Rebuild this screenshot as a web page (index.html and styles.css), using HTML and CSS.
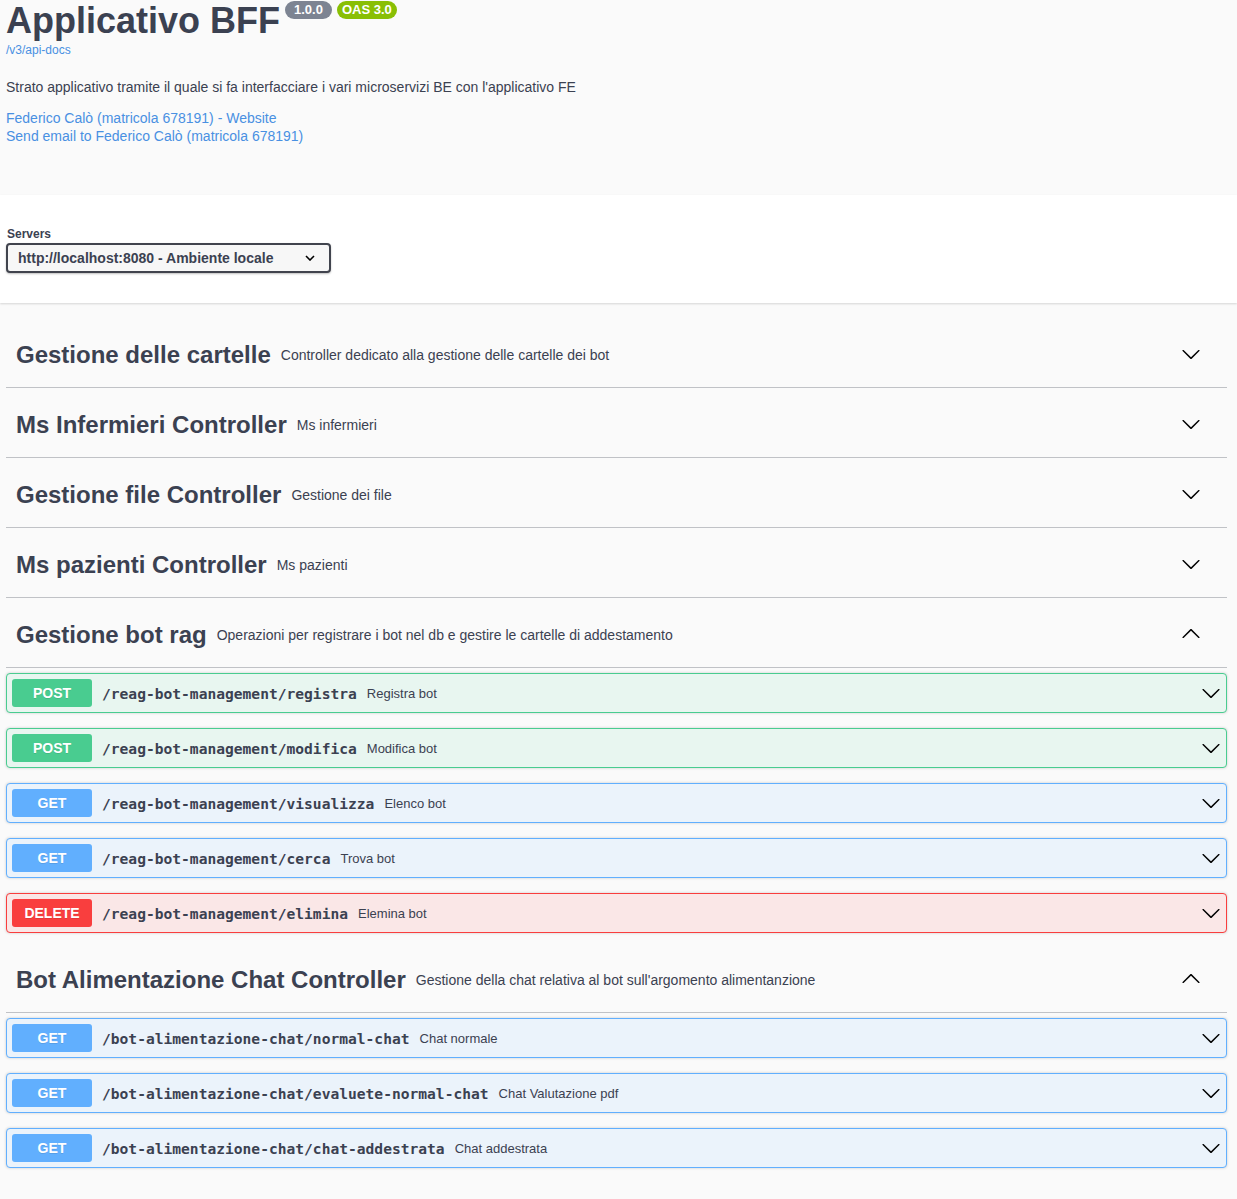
FILE: index.html
```html
<!DOCTYPE html>
<html lang="it">
<head>
<meta charset="utf-8">
<title>Applicativo BFF</title>
<link rel="stylesheet" href="styles.css">
</head>
<body>
<div class="info">
  <div class="title-row">
    <h2 class="title">Applicativo BFF</h2>
    <span class="badge badge-version">1.0.0</span>
    <span class="badge badge-oas">OAS 3.0</span>
  </div>
  <a class="url" href="#">/v3/api-docs</a>
  <p class="desc">Strato applicativo tramite il quale si fa interfacciare i vari microservizi BE con l'applicativo FE</p>
  <div class="contacts">
    <a href="#">Federico Calò (matricola 678191) - Website</a>
    <a href="#">Send email to Federico Calò (matricola 678191)</a>
  </div>
</div>

<div class="scheme-container">
  <div class="servers">
    <span class="servers-label">Servers</span>
    <div class="select">
      <span>http://localhost:8080 - Ambiente locale</span>
      <svg class="select-arrow" width="10" height="6" viewBox="0 0 10 6"><path d="M1 1l4 4 4-4" fill="none" stroke="#000" stroke-width="1.6"/></svg>
    </div>
  </div>
</div>

<div class="wrapper">
  <section class="tag-section">
    <div class="tag-header">
      <h3 class="tag-title">Gestione delle cartelle</h3>
      <span class="tag-desc">Controller dedicato alla gestione delle cartelle dei bot</span>
      <svg class="arrow" width="20" height="20" viewBox="0 0 20 20"><path d="M17.418 6.109c.272-.268.709-.268.979 0s.271.701 0 .969l-7.908 7.83c-.27.268-.707.268-.979 0l-7.908-7.83c-.27-.268-.27-.701 0-.969.271-.268.709-.268.979 0L10 13.25l7.418-7.141z"/></svg>
    </div>
  </section>

  <section class="tag-section">
    <div class="tag-header">
      <h3 class="tag-title">Ms Infermieri Controller</h3>
      <span class="tag-desc">Ms infermieri</span>
      <svg class="arrow" width="20" height="20" viewBox="0 0 20 20"><path d="M17.418 6.109c.272-.268.709-.268.979 0s.271.701 0 .969l-7.908 7.83c-.27.268-.707.268-.979 0l-7.908-7.83c-.27-.268-.27-.701 0-.969.271-.268.709-.268.979 0L10 13.25l7.418-7.141z"/></svg>
    </div>
  </section>

  <section class="tag-section">
    <div class="tag-header">
      <h3 class="tag-title">Gestione file Controller</h3>
      <span class="tag-desc">Gestione dei file</span>
      <svg class="arrow" width="20" height="20" viewBox="0 0 20 20"><path d="M17.418 6.109c.272-.268.709-.268.979 0s.271.701 0 .969l-7.908 7.83c-.27.268-.707.268-.979 0l-7.908-7.83c-.27-.268-.27-.701 0-.969.271-.268.709-.268.979 0L10 13.25l7.418-7.141z"/></svg>
    </div>
  </section>

  <section class="tag-section">
    <div class="tag-header">
      <h3 class="tag-title">Ms pazienti Controller</h3>
      <span class="tag-desc">Ms pazienti</span>
      <svg class="arrow" width="20" height="20" viewBox="0 0 20 20"><path d="M17.418 6.109c.272-.268.709-.268.979 0s.271.701 0 .969l-7.908 7.83c-.27.268-.707.268-.979 0l-7.908-7.83c-.27-.268-.27-.701 0-.969.271-.268.709-.268.979 0L10 13.25l7.418-7.141z"/></svg>
    </div>
  </section>

  <section class="tag-section">
    <div class="tag-header">
      <h3 class="tag-title">Gestione bot rag</h3>
      <span class="tag-desc">Operazioni per registrare i bot nel db e gestire le cartelle di addestamento</span>
      <svg class="arrow up" width="20" height="20" viewBox="0 0 20 20"><path d="M17.418 6.109c.272-.268.709-.268.979 0s.271.701 0 .969l-7.908 7.83c-.27.268-.707.268-.979 0l-7.908-7.83c-.27-.268-.27-.701 0-.969.271-.268.709-.268.979 0L10 13.25l7.418-7.141z"/></svg>
    </div>
    <div class="ops">
      <div class="op op-post">
        <span class="method">POST</span>
        <span class="path">/reag-bot-management/registra</span>
        <span class="op-desc">Registra bot</span>
        <svg class="op-arrow" width="20" height="20" viewBox="0 0 20 20"><path d="M17.418 6.109c.272-.268.709-.268.979 0s.271.701 0 .969l-7.908 7.83c-.27.268-.707.268-.979 0l-7.908-7.83c-.27-.268-.27-.701 0-.969.271-.268.709-.268.979 0L10 13.25l7.418-7.141z"/></svg>
      </div>
      <div class="op op-post">
        <span class="method">POST</span>
        <span class="path">/reag-bot-management/modifica</span>
        <span class="op-desc">Modifica bot</span>
        <svg class="op-arrow" width="20" height="20" viewBox="0 0 20 20"><path d="M17.418 6.109c.272-.268.709-.268.979 0s.271.701 0 .969l-7.908 7.83c-.27.268-.707.268-.979 0l-7.908-7.83c-.27-.268-.27-.701 0-.969.271-.268.709-.268.979 0L10 13.25l7.418-7.141z"/></svg>
      </div>
      <div class="op op-get">
        <span class="method">GET</span>
        <span class="path">/reag-bot-management/visualizza</span>
        <span class="op-desc">Elenco bot</span>
        <svg class="op-arrow" width="20" height="20" viewBox="0 0 20 20"><path d="M17.418 6.109c.272-.268.709-.268.979 0s.271.701 0 .969l-7.908 7.83c-.27.268-.707.268-.979 0l-7.908-7.83c-.27-.268-.27-.701 0-.969.271-.268.709-.268.979 0L10 13.25l7.418-7.141z"/></svg>
      </div>
      <div class="op op-get">
        <span class="method">GET</span>
        <span class="path">/reag-bot-management/cerca</span>
        <span class="op-desc">Trova bot</span>
        <svg class="op-arrow" width="20" height="20" viewBox="0 0 20 20"><path d="M17.418 6.109c.272-.268.709-.268.979 0s.271.701 0 .969l-7.908 7.83c-.27.268-.707.268-.979 0l-7.908-7.83c-.27-.268-.27-.701 0-.969.271-.268.709-.268.979 0L10 13.25l7.418-7.141z"/></svg>
      </div>
      <div class="op op-delete">
        <span class="method">DELETE</span>
        <span class="path">/reag-bot-management/elimina</span>
        <span class="op-desc">Elemina bot</span>
        <svg class="op-arrow" width="20" height="20" viewBox="0 0 20 20"><path d="M17.418 6.109c.272-.268.709-.268.979 0s.271.701 0 .969l-7.908 7.83c-.27.268-.707.268-.979 0l-7.908-7.83c-.27-.268-.27-.701 0-.969.271-.268.709-.268.979 0L10 13.25l7.418-7.141z"/></svg>
      </div>
    </div>
  </section>

  <section class="tag-section">
    <div class="tag-header">
      <h3 class="tag-title">Bot Alimentazione Chat Controller</h3>
      <span class="tag-desc">Gestione della chat relativa al bot sull'argomento alimentanzione</span>
      <svg class="arrow up" width="20" height="20" viewBox="0 0 20 20"><path d="M17.418 6.109c.272-.268.709-.268.979 0s.271.701 0 .969l-7.908 7.83c-.27.268-.707.268-.979 0l-7.908-7.83c-.27-.268-.27-.701 0-.969.271-.268.709-.268.979 0L10 13.25l7.418-7.141z"/></svg>
    </div>
    <div class="ops">
      <div class="op op-get">
        <span class="method">GET</span>
        <span class="path">/bot-alimentazione-chat/normal-chat</span>
        <span class="op-desc">Chat normale</span>
        <svg class="op-arrow" width="20" height="20" viewBox="0 0 20 20"><path d="M17.418 6.109c.272-.268.709-.268.979 0s.271.701 0 .969l-7.908 7.83c-.27.268-.707.268-.979 0l-7.908-7.83c-.27-.268-.27-.701 0-.969.271-.268.709-.268.979 0L10 13.25l7.418-7.141z"/></svg>
      </div>
      <div class="op op-get">
        <span class="method">GET</span>
        <span class="path">/bot-alimentazione-chat/evaluete-normal-chat</span>
        <span class="op-desc">Chat Valutazione pdf</span>
        <svg class="op-arrow" width="20" height="20" viewBox="0 0 20 20"><path d="M17.418 6.109c.272-.268.709-.268.979 0s.271.701 0 .969l-7.908 7.83c-.27.268-.707.268-.979 0l-7.908-7.83c-.27-.268-.27-.701 0-.969.271-.268.709-.268.979 0L10 13.25l7.418-7.141z"/></svg>
      </div>
      <div class="op op-get">
        <span class="method">GET</span>
        <span class="path">/bot-alimentazione-chat/chat-addestrata</span>
        <span class="op-desc">Chat addestrata</span>
        <svg class="op-arrow" width="20" height="20" viewBox="0 0 20 20"><path d="M17.418 6.109c.272-.268.709-.268.979 0s.271.701 0 .969l-7.908 7.83c-.27.268-.707.268-.979 0l-7.908-7.83c-.27-.268-.27-.701 0-.969.271-.268.709-.268.979 0L10 13.25l7.418-7.141z"/></svg>
      </div>
    </div>
  </section>
</div>
</body>
</html>
```
FILE: styles.css
```css
html, body {
  margin: 0;
  padding: 0;
  background: #fafafa;
  font-family: "Liberation Sans", Arial, sans-serif;
  color: #3b4151;
}

.info {
  height: 195px;
  box-sizing: border-box;
  padding: 0 6px;
}

.title-row {
  display: flex;
  align-items: flex-start;
}

.title {
  margin: 0;
  font-size: 36px;
  line-height: 41px;
  font-weight: bold;
  color: #3b4151;
}

.badge {
  display: inline-block;
  margin-top: 1px;
  height: 18px;
  line-height: 18px;
  border-radius: 57px;
  color: #fff;
  font-size: 13px;
  font-weight: bold;
  text-align: center;
}

.badge-version {
  background: #7d8492;
  margin-left: 5px;
  padding: 0 9px;
}

.badge-oas {
  background: #89bf04;
  margin-left: 5px;
  padding: 0 5px;
}

.url {
  display: block;
  margin-top: 2px;
  font-size: 12px;
  line-height: 14px;
  color: #4990e2;
  text-decoration: none;
}

.desc {
  margin: 22px 0 0;
  font-size: 14px;
  line-height: 17px;
}

.contacts {
  margin-top: 13px;
  display: flex;
  flex-direction: column;
  align-items: flex-start;
}

.contacts a {
  font-size: 14px;
  line-height: 18px;
  color: #4990e2;
  text-decoration: none;
}

.scheme-container {
  background: #fff;
  box-shadow: 0 1px 2px 0 rgba(0, 0, 0, 0.15);
  padding: 32px 0 30px;
}

.servers {
  padding-left: 6px;
}

.servers-label {
  display: block;
  padding-left: 1px;
  font-size: 12px;
  line-height: 14px;
  font-weight: bold;
  margin-bottom: 2px;
}

.select {
  width: 325px;
  height: 30px;
  box-sizing: border-box;
  border: 2px solid #41444e;
  border-radius: 4px;
  background: #f7f7f7;
  box-shadow: 0 1px 2px 0 rgba(0, 0, 0, 0.25);
  display: flex;
  align-items: center;
  padding: 0 14px 0 10px;
  font-size: 14px;
  font-weight: bold;
  color: #3b4151;
}

.select span {
  flex: 1;
}

.wrapper {
  padding: 20px 10px 20px 6px;
}

.tag-header {
  height: 65px;
  box-sizing: border-box;
  border-bottom: 1px solid rgba(59, 65, 81, 0.3);
  margin-bottom: 5px;
  display: flex;
  align-items: center;
  padding: 0 26px 0 10px;
}

.tag-title {
  margin: 0;
  font-size: 24px;
  font-weight: bold;
  line-height: 30px;
  color: #3b4151;
  white-space: nowrap;
}

.tag-desc {
  flex: 1;
  margin-left: 10px;
  font-size: 14px;
}

.arrow {
  fill: #000;
  margin-bottom: 3px;
}

.arrow.up {
  transform: rotate(180deg);
}

.op {
  height: 40px;
  box-sizing: border-box;
  border: 1px solid;
  border-radius: 4px;
  margin-bottom: 15px;
  display: flex;
  align-items: center;
  padding: 0 5px;
  box-shadow: 0 0 3px rgba(0, 0, 0, 0.19);
}

.method {
  min-width: 80px;
  height: 28px;
  line-height: 28px;
  border-radius: 3px;
  text-align: center;
  color: #fff;
  font-size: 14px;
  font-weight: bold;
  text-shadow: 0 1px 0 rgba(0, 0, 0, 0.1);
}

.path {
  padding: 0 10px;
  font-family: "DejaVu Sans Mono", "Liberation Mono", monospace;
  font-size: 14.6px;
  font-weight: bold;
  color: #3b4151;
}

.op-desc {
  flex: 1;
  font-size: 13px;
  color: #3b4151;
}

.op-arrow {
  fill: #000;
}

.op-post {
  background: #e8f6f0;
  border-color: #49cc90;
}
.op-post .method { background: #49cc90; }

.op-get {
  background: #ebf3fb;
  border-color: #61affe;
}
.op-get .method { background: #61affe; }

.op-delete {
  background: #fae7e7;
  border-color: #f93e3e;
}
.op-delete .method { background: #f93e3e; }
```
